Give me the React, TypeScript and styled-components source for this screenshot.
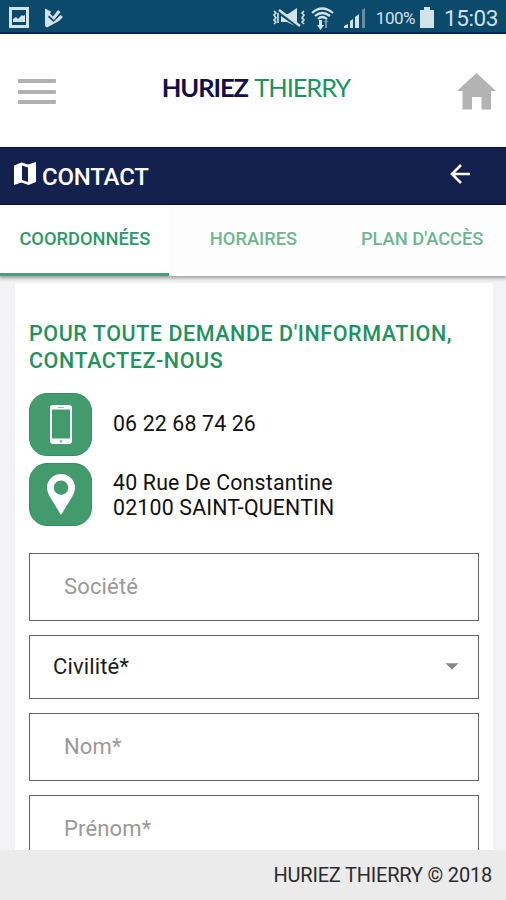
import React from 'react';
import styled, { createGlobalStyle } from 'styled-components';

const GlobalStyle = createGlobalStyle`
  * { box-sizing: border-box; }
  body { margin: 0; background: #f3f3f6; }
`;

const Screen = styled.div`
  display: flex;
  flex-direction: column;
  width: 506px;
  height: 900px;
  overflow: hidden;
  background: #f3f3f6;
  font-family: Roboto, 'Liberation Sans', sans-serif;
  color: #111;
`;

const StatusBar = styled.div`
  display: flex;
  flex: none;
  align-items: center;
  justify-content: space-between;
  height: 34px;
  padding: 3px 8px 0 9px;
  background: #0c4a6c;
  border-bottom: 2px solid #0b2456;
  color: #d3e1e9;
`;

const StatusGroup = styled.div<{ $gap?: number }>`
  display: flex;
  align-items: center;
  gap: ${(p) => p.$gap ?? 0}px;
  height: 32px;
`;

const StatusText = styled.span<{ $size: number; $spacing?: number }>`
  font-size: ${(p) => p.$size}px;
  line-height: 32px;
  letter-spacing: ${(p) => p.$spacing ?? 0}px;
  padding-top: 1px;
`;

const Header = styled.header`
  display: flex;
  flex: none;
  align-items: center;
  justify-content: space-between;
  height: 113px;
  padding: 0 10px 0 18px;
  background: #fff;
`;

const MenuButton = styled.button`
  display: flex;
  flex-direction: column;
  justify-content: space-between;
  width: 38px;
  height: 25px;
  margin-top: 2px;
  padding: 0;
  border: 0;
  background: none;
`;

const MenuLine = styled.span`
  height: 4px;
  border-radius: 1px;
  background: #b1b1b1;
`;

const Brand = styled.div`
  margin: -8px 0 0 -1px;
  font-family: Lato, sans-serif;
  font-size: 25.5px;
  line-height: 32px;
  letter-spacing: -1.1px;
  word-spacing: 1.8px;
  color: #1a9562;
  white-space: nowrap;

  b {
    font-weight: 700;
    color: #120f4b;
  }
`;

const HomeIcon = styled.svg`
  display: block;
  margin-top: 1px;
`;

const TitleBar = styled.div`
  display: flex;
  flex: none;
  align-items: center;
  height: 58px;
  padding: 0 35px 4px 14px;
  background: #14214e;
  border-top: 1px solid #0a1140;
  border-bottom: 1px solid #0a1140;
  color: #fff;
`;

const Title = styled.h1`
  flex: 1;
  margin: 5px 0 0 6px;
  font-size: 24px;
  font-weight: 500;
  letter-spacing: -0.2px;
`;

const TabBar = styled.nav`
  display: flex;
  flex: none;
  position: relative;
  height: 71px;
  background: #fdfdfd;
  box-shadow: 0 1px 4px 1px rgba(0, 0, 0, 0.38);
`;

const Tab = styled.button<{ $active?: boolean }>`
  flex: 1;
  padding: 0 0 2px 1px;
  border: 0;
  border-bottom: 3px solid ${(p) => (p.$active ? '#4d9b78' : 'transparent')};
  background: ${(p) => (p.$active ? '#fff' : 'transparent')};
  font-family: inherit;
  font-size: 18.3px;
  font-weight: 500;
  letter-spacing: 0;
  white-space: nowrap;
  color: ${(p) => (p.$active ? '#2b9969' : '#6fb594')};
`;

const Card = styled.main`
  flex: 1;
  min-height: 0;
  overflow: hidden;
  margin: 7px 13px 0 15px;
  padding: 38px 14px 0 14px;
  border-radius: 3px 3px 0 0;
  background: #fff;
`;

const Heading = styled.h2`
  margin: 0 0 19px;
  font-size: 21.5px;
  line-height: 26.5px;
  font-weight: 500;
  letter-spacing: 0.56px;
  white-space: nowrap;
  color: #1f9260;
`;

const ContactRow = styled.div`
  display: flex;
  align-items: center;
  height: 63px;
  margin-bottom: 7px;
`;

const ContactIcon = styled.div`
  display: flex;
  align-items: center;
  justify-content: center;
  width: 63px;
  height: 63px;
  margin-right: 21px;
  border-radius: 18px;
  background: #439a6c;
  border: 1px solid #2f9263;
`;

const ContactText = styled.div<{ $spacing: number }>`
  font-size: 21.3px;
  line-height: 25.5px;
  letter-spacing: ${(p) => p.$spacing}px;
  white-space: nowrap;
`;

const PhoneNumber = styled(ContactText)`
  padding-bottom: 2px;
`;

const Address = styled(ContactText)`
  padding-top: 1px;
`;

const Form = styled.form`
  display: flex;
  flex-direction: column;
  gap: 14px;
  margin-top: 27px;
`;

const Field = styled.div<{ $select?: boolean }>`
  display: flex;
  flex: none;
  align-items: center;
  justify-content: space-between;
  height: ${(p) => (p.$select ? 64 : 68)}px;
  padding: 0 19px 1px ${(p) => (p.$select ? 23 : 34)}px;
  border: 1px solid #656565;
  font-size: 22px;
  letter-spacing: 0.15px;
  color: ${(p) => (p.$select ? '#1a1a1a' : '#999')};
`;

const Footer = styled.footer`
  flex: none;
  height: 50px;
  padding-right: 14px;
  background: #ebebeb;
  font-size: 20px;
  line-height: 51px;
  letter-spacing: -0.2px;
  text-align: right;
  color: #2b2b2b;
`;

const GalleryIcon = () => (
  <svg width="20" height="22" viewBox="0 0 20 22">
    <path fill="currentColor" fillRule="evenodd" d="M0 0H20V21H0ZM3 3V18H17V3Z" />
    <path fill="currentColor" d="M4 15V12L7 10L9 12L13 8L14 9L16 8V15Z" />
  </svg>
);

const PlayCheckIcon = () => (
  <svg width="19" height="20" viewBox="0 0 19 20">
    <path
      fill="currentColor"
      d="M1 0.500L7 3.500L6 5.500L9 8.500L14 2L16.500 4L10 12L5 7.500L4 9L9.500 14L16.500 7L19 9L15 13L3 19.500L1 18Z"
    />
  </svg>
);

const VibrateMuteIcon = () => (
  <svg width="33" height="22" viewBox="0 0 33 22" fill="none" stroke="currentColor" strokeWidth="1.6">
    <path d="M1 4L3 6L1 8L3 11L1 13L3 15L1 17M5 6V16M31 4L29 6L31 8L29 11L31 13L29 15L31 17" />
    <path fill="currentColor" stroke="none" d="M8 7H15L24 1V17L12 8ZM8 9L22 19L14 15H8Z" />
    <path strokeWidth="2.400" d="M6 3L27 19" />
  </svg>
);

const WifiIcon = () => (
  <svg width="23" height="24" viewBox="0 0 23 24" fill="none" stroke="currentColor">
    <path strokeWidth="2.200" d="M1 7Q11 -2 22 7M4 10Q11 4 19 10M7 13Q11 9 16 13" />
    <path fill="currentColor" stroke="none" d="M8 14H11V19H13L9.500 24L6 19H8Z" />
    <path fill="currentColor" stroke="none" opacity=".5" d="M14 22V16H12.500L15 13L17.500 16H16V22Z" />
  </svg>
);

const SignalIcon = () => (
  <svg width="24" height="22" viewBox="0 0 24 22" fill="currentColor">
    <path d="M1 21V19L5 17V21ZM7 14L10 12V21H7ZM12 10L16 7V21H12Z" />
    <path opacity=".45" d="M19 3L22 1V21H19Z" />
  </svg>
);

const BatteryIcon = () => (
  <svg width="16" height="22" viewBox="0 0 16 22">
    <path fill="currentColor" d="M5 0H11V3H15V21H1V3H5Z" />
  </svg>
);

const MapIcon = () => (
  <svg width="22" height="24" viewBox="0 0 22 24">
    <path
      fill="#fff"
      fillRule="evenodd"
      d="M0 3.500L7.500 0.500L14 2.500L22 0V20L14.500 23L7.500 20.500L0 23ZM8 3.500V18L14 20V5.500Z"
    />
  </svg>
);

const BackArrowIcon = () => (
  <svg width="21" height="20" viewBox="0 0 21 20" fill="none" stroke="#fff" strokeWidth="2.600">
    <path d="M11 1L2 10L11 19M2 10H20" />
  </svg>
);

const PhoneIcon = () => (
  <svg width="22" height="39" viewBox="0 0 22 39">
    <rect width="22" height="39" rx="3" fill="#fff" />
    <rect x="2" y="4.500" width="18" height="29" fill="#439a6c" />
    <rect x="8" y="2" width="6" height="1" rx=".5" fill="#8dc3a6" />
    <circle cx="11" cy="36.300" r="1.500" fill="#8dc3a6" />
  </svg>
);

const PinIcon = () => (
  <svg width="28" height="42" viewBox="0 0 28 42">
    <path
      fill="#fff"
      fillRule="evenodd"
      d="M14 0C6.300 0 0 6 0 13.500C0 17 1.500 20 3 23L14 41L25 23C26.500 20 28 17 28 13.500C28 6 21.700 0 14 0ZM14 6.500A7.200 7.200 0 1 1 14 20.900A7.200 7.200 0 1 1 14 6.500Z"
    />
  </svg>
);

const CaretIcon = () => (
  <svg width="14" height="7" viewBox="0 0 14 7">
    <path fill="#888" d="M0.500 0.300H13.500L7 6.800Z" />
  </svg>
);

export default function App() {
  return (
    <Screen>
      <GlobalStyle />
      <StatusBar>
        <StatusGroup $gap={15}>
          <GalleryIcon />
          <PlayCheckIcon />
        </StatusGroup>
        <StatusGroup $gap={9}>
          <StatusGroup $gap={5}>
            <VibrateMuteIcon />
            <WifiIcon />
          </StatusGroup>
          <SignalIcon />
          <StatusGroup $gap={4}>
            <StatusText $size={17} $spacing={-0.5}>100%</StatusText>
            <BatteryIcon />
          </StatusGroup>
          <StatusText $size={22.5} $spacing={-0.4}>15:03</StatusText>
        </StatusGroup>
      </StatusBar>
      <Header>
        <MenuButton aria-label="Menu">
          <MenuLine />
          <MenuLine />
          <MenuLine />
        </MenuButton>
        <Brand>
          <b>HURIEZ</b> THIERRY
        </Brand>
        <HomeIcon width="39" height="37" viewBox="0 0 39 37">
          <path fill="#b3b3b3" d="M19.500 0L39 18H34V36.500H24.500V24H15V36.500H5.500V18H0Z" />
        </HomeIcon>
      </Header>
      <TitleBar>
        <MapIcon />
        <Title>CONTACT</Title>
        <BackArrowIcon />
      </TitleBar>
      <TabBar>
        <Tab $active>COORDONNÉES</Tab>
        <Tab>HORAIRES</Tab>
        <Tab>PLAN D'ACCÈS</Tab>
      </TabBar>
      <Card>
        <Heading>
          POUR TOUTE DEMANDE D'INFORMATION,
          <br />
          CONTACTEZ-NOUS
        </Heading>
        <ContactRow>
          <ContactIcon>
            <PhoneIcon />
          </ContactIcon>
          <PhoneNumber $spacing={0.15}>06 22 68 74 26</PhoneNumber>
        </ContactRow>
        <ContactRow>
          <ContactIcon>
            <PinIcon />
          </ContactIcon>
          <Address $spacing={0.2}>
            40 Rue De Constantine
            <br />
            02100 SAINT-QUENTIN
          </Address>
        </ContactRow>
        <Form>
          <Field>Société</Field>
          <Field $select>
            Civilité*
            <CaretIcon />
          </Field>
          <Field>Nom*</Field>
          <Field>Prénom*</Field>
        </Form>
      </Card>
      <Footer>HURIEZ THIERRY © 2018</Footer>
    </Screen>
  );
}
